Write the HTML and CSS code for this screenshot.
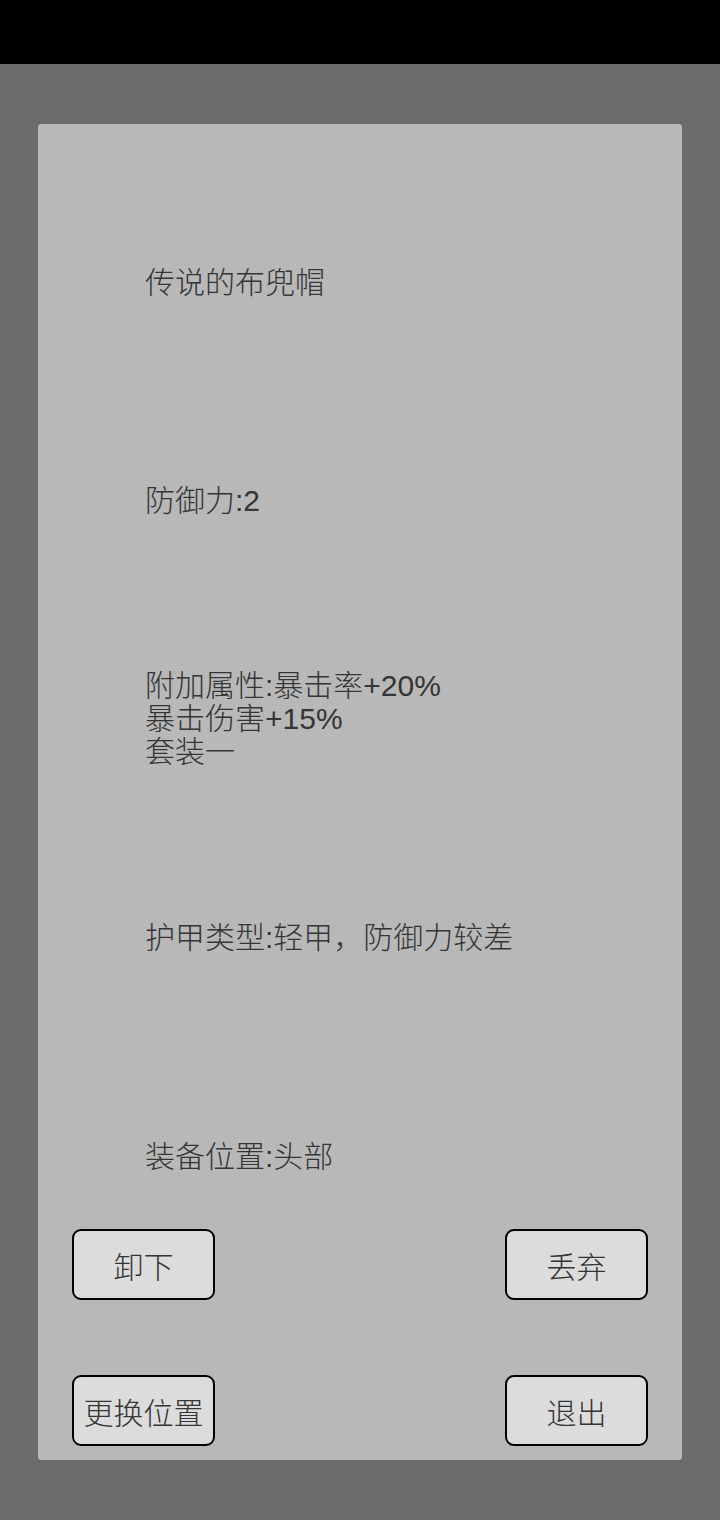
FILE: index.html
```
<!DOCTYPE html>
<html lang="zh">
<head>
<meta charset="utf-8">
<link rel="stylesheet" href="styles.css">
</head>
<body>
<div class="statusbar"></div>
<div class="panel">
  <div class="info title">传说的布兜帽</div>
  <div class="info def">防御力:2</div>
  <div class="info attr">附加属性:暴击率+20%<br>暴击伤害+15%<br>套装一</div>
  <div class="info armor">护甲类型:轻甲，防御力较差</div>
  <div class="info slot">装备位置:头部</div>
  <div class="buttons">
    <div class="btn">卸下</div>
    <div class="btn">丢弃</div>
    <div class="btn">更换位置</div>
    <div class="btn">退出</div>
  </div>
</div>
</body>
</html>
```
FILE: styles.css
```
html, body {
  margin: 0;
  padding: 0;
}
body {
  width: 720px;
  height: 1520px;
  background: #6c6c6c;
  font-family: "Liberation Sans", "Noto Sans CJK SC", sans-serif;
  font-weight: 300;
  color: #353535;
  overflow: hidden;
}
.statusbar {
  height: 64px;
  background: #000000;
}
.panel {
  margin: 60px 0 0 38px;
  width: 644px;
  height: 1336px;
  box-sizing: border-box;
  background: #b8b8b8;
  border-radius: 3px;
  padding: 142px 34px 0 34px;
  display: flex;
  flex-direction: column;
}
.info {
  font-size: 30px;
  line-height: 33px;
  padding-left: 73px;
  white-space: nowrap;
}
.def { margin-top: 185px; }
.attr { margin-top: 152px; }
.armor { margin-top: 153px; }
.slot { margin-top: 186px; }
.buttons {
  margin-top: 56px;
  display: grid;
  grid-template-columns: 143px 143px;
  justify-content: space-between;
  row-gap: 75px;
}
.btn {
  box-sizing: border-box;
  height: 71px;
  background: #dcdcdc;
  border: 2px solid #000000;
  border-radius: 9px;
  display: flex;
  align-items: center;
  justify-content: center;
  font-size: 30px;
  white-space: nowrap;
}
```
